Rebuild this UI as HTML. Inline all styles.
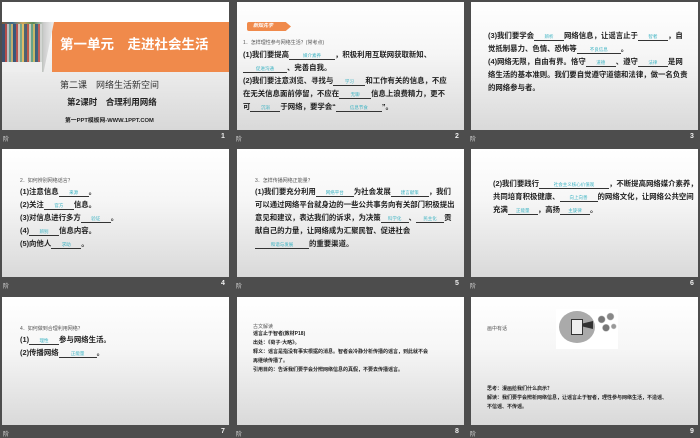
<!DOCTYPE html>
<html><head><meta charset="utf-8"><style>
*{margin:0;padding:0;box-sizing:border-box}
body{width:700px;height:438px;background:#4d4d4d;position:relative;overflow:hidden;font-family:"Liberation Sans","Noto Sans CJK SC",sans-serif}
.s{position:absolute;width:227px;height:128px;background:linear-gradient(#ffffff 0%,#f6f6f6 40%,#d9d9d9 100%);overflow:hidden}
.t{position:absolute;white-space:nowrap;color:#222;font-weight:bold;font-size:7.4px;line-height:13px}
.q{position:absolute;white-space:nowrap;color:#555;font-size:5px}
.b{display:inline-block;border-bottom:0.8px solid #333;height:8px;vertical-align:baseline;text-align:center;font-size:4.5px;line-height:7px;color:#3bb3c3;font-weight:normal}
.f{position:absolute;color:#ddd;font-size:6px}
.n{position:absolute;color:#eee;font-size:7px;font-weight:bold}
</style></head><body>

<!-- slide 1 -->
<div class="s" style="left:2px;top:2px;background:linear-gradient(#fff 0,#fff 20px,#ececec 70px,#d8d8d8 128px)">
 <div style="position:absolute;left:50px;top:20px;width:177px;height:50px;background:#f08a4b"></div>
 <div style="position:absolute;left:0;top:20px;width:52px;height:50px;background:linear-gradient(90deg,#7a5a3a,#3e6a8a 20%,#c9a35a 40%,#5a8a5a 60%,#ccc 80%,#eee);clip-path:polygon(0 0,100% 0,80% 100%,0 100%)"></div>
 <div style="position:absolute;left:0;top:22px;width:40px;height:48px;background:repeating-linear-gradient(90deg,#2d4d7a 0 3px,#c44 3px 5px,#ddd 5px 7px,#6a9 7px 9px,#e9c46a 9px 11px);opacity:.75"></div>
 <div style="position:absolute;left:0;top:60px;width:40px;height:10px;background:#eee"></div>
 <div class="t" style="left:58px;top:35px;font-size:13.5px;line-height:16px;color:#fff">第一单元　走进社会生活</div>
 <div class="t" style="left:58px;top:77px;font-size:9px;font-weight:normal;color:#333">第二课　网络生活新空间</div>
 <div class="t" style="left:65px;top:94px;font-size:8.5px">第2课时　合理利用网络</div>
 <div class="t" style="left:63px;top:113px;font-size:5.8px">第一PPT模板网-WWW.1PPT.COM</div>
</div>
<div class="f" style="left:3px;top:134px">阶</div><div class="n" style="left:221px;top:133px">1</div>

<!-- slide 2 -->
<div class="s" style="left:237px;top:2px">
 <div style="position:absolute;left:10px;top:20px;width:44px;height:9px;background:#f08a4b;border-radius:2px;clip-path:polygon(0 0,88% 0,100% 50%,88% 100%,0 100%)"></div>
 <div class="t" style="left:16px;top:18px;font-size:5px;color:#fff;font-style:italic">新知先学</div>
 <div class="q" style="left:6px;top:37px">1．怎样理性参与网络生活？(常考点)</div>
 <div class="t" style="left:6px;top:46px">(1)我们要提高<span class="b" style="width:46px">媒介素养</span>，积极利用互联网获取新知、</div>
 <div class="t" style="left:6px;top:59px"><span class="b" style="width:44px">促进沟通</span>、完善自我。</div>
 <div class="t" style="left:6px;top:72px">(2)我们要注意浏览、寻找与<span class="b" style="width:32px">学习</span>和工作有关的信息，不应</div>
 <div class="t" style="left:6px;top:85px">在无关信息面前停留，不应在<span class="b" style="width:32px">无聊</span>信息上浪费精力，更不</div>
 <div class="t" style="left:6px;top:98px">可<span class="b" style="width:30px">沉溺</span>于网络，要学会“<span class="b" style="width:46px">信息节食</span>”。</div>
</div>
<div class="f" style="left:236px;top:134px">阶</div><div class="n" style="left:455px;top:133px">2</div>

<!-- slide 3 -->
<div class="s" style="left:471px;top:2px">
 <div class="t" style="left:17px;top:27px">(3)我们要学会<span class="b" style="width:30px">辨析</span>网络信息，让谣言止于<span class="b" style="width:30px">智者</span>，自</div>
 <div class="t" style="left:17px;top:40px">觉抵制暴力、色情、恐怖等<span class="b" style="width:44px">不良信息</span>。</div>
 <div class="t" style="left:17px;top:53px">(4)网络无限，自由有界。恪守<span class="b" style="width:30px">道德</span>、遵守<span class="b" style="width:30px">法律</span>是网</div>
 <div class="t" style="left:17px;top:66px">络生活的基本准则。我们要自觉遵守道德和法律，做一名负责</div>
 <div class="t" style="left:17px;top:79px">的网络参与者。</div>
</div>
<div class="f" style="left:470px;top:134px">阶</div><div class="n" style="left:690px;top:133px">3</div>

<!-- slide 4 -->
<div class="s" style="left:2px;top:149px">
 <div class="q" style="left:18px;top:28px">2．如何辨别网络谣言？</div>
 <div class="t" style="left:18px;top:36px">(1)注意信息<span class="b" style="width:30px">来源</span>。</div>
 <div class="t" style="left:18px;top:49px">(2)关注<span class="b" style="width:30px">官方</span>信息。</div>
 <div class="t" style="left:18px;top:62px">(3)对信息进行多方<span class="b" style="width:30px">验证</span>。</div>
 <div class="t" style="left:18px;top:75px">(4)<span class="b" style="width:30px">辨别</span>信息内容。</div>
 <div class="t" style="left:18px;top:88px">(5)向他人<span class="b" style="width:30px">求助</span>。</div>
</div>
<div class="f" style="left:3px;top:281px">阶</div><div class="n" style="left:221px;top:280px">4</div>

<!-- slide 5 -->
<div class="s" style="left:237px;top:149px">
 <div class="q" style="left:18px;top:28px">3．怎样传播网络正能量？</div>
 <div class="t" style="left:18px;top:36px">(1)我们要充分利用<span class="b" style="width:38px">网络平台</span>为社会发展<span class="b" style="width:38px">建言献策</span>，我们</div>
 <div class="t" style="left:18px;top:49px">可以通过网络平台就身边的一些公共事务向有关部门积极提出</div>
 <div class="t" style="left:18px;top:62px">意见和建议，表达我们的诉求，为决策<span class="b" style="width:28px">科学化</span>、<span class="b" style="width:28px">民主化</span>贡</div>
 <div class="t" style="left:18px;top:75px">献自己的力量，让网络成为汇聚民智、促进社会</div>
 <div class="t" style="left:18px;top:88px"><span class="b" style="width:54px">和谐与发展</span>的重要渠道。</div>
</div>
<div class="f" style="left:236px;top:281px">阶</div><div class="n" style="left:455px;top:280px">5</div>

<!-- slide 6 -->
<div class="s" style="left:471px;top:149px">
 <div class="t" style="left:22px;top:28px">(2)我们要践行<span class="b" style="width:70px">社会主义核心价值观</span>，不断提高网络媒介素养，</div>
 <div class="t" style="left:22px;top:41px">共同培育积极健康、<span class="b" style="width:38px">向上向善</span>的网络文化，让网络公共空间</div>
 <div class="t" style="left:22px;top:54px">充满<span class="b" style="width:30px">正能量</span>，高扬<span class="b" style="width:30px">主旋律</span>。</div>
</div>
<div class="f" style="left:470px;top:281px">阶</div><div class="n" style="left:690px;top:280px">6</div>

<!-- slide 7 -->
<div class="s" style="left:2px;top:297px">
 <div class="q" style="left:18px;top:28px">4．如何做到合理利用网络？</div>
 <div class="t" style="left:18px;top:36px">(1)<span class="b" style="width:30px">理性</span>参与网络生活。</div>
 <div class="t" style="left:18px;top:49px">(2)传播网络<span class="b" style="width:38px">正能量</span>。</div>
</div>
<div class="f" style="left:3px;top:429px">阶</div><div class="n" style="left:221px;top:428px">7</div>

<!-- slide 8 -->
<div class="s" style="left:237px;top:297px">
 <div class="q" style="left:16px;top:26px">古文解读</div>
 <div class="t" style="left:16px;top:33px;font-size:5px;line-height:9px">谣言止于智者(教材P18)</div>
 <div class="t" style="left:16px;top:42px;font-size:5px;line-height:9px">出处：《荀子·大略》。</div>
 <div class="t" style="left:16px;top:51px;font-size:5px;line-height:9px">释义：谣言是指没有事实根据的消息。智者会冷静分析传播的谣言，到此就不会</div>
 <div class="t" style="left:16px;top:60px;font-size:5px;line-height:9px">再继续传播了。</div>
 <div class="t" style="left:16px;top:69px;font-size:5px;line-height:9px">引用目的：告诉我们要学会分辨网络信息的真假，不要去传播谣言。</div>
</div>
<div class="f" style="left:236px;top:429px">阶</div><div class="n" style="left:455px;top:428px">8</div>

<!-- slide 9 -->
<div class="s" style="left:471px;top:297px">
 <div class="q" style="left:16px;top:28px">画中有话</div>
 <div style="position:absolute;left:85px;top:12px;width:62px;height:40px;background:#fff"></div>
 <div style="position:absolute;left:88px;top:14px;width:36px;height:32px;border-radius:50%;background:#aaa"></div>
 <div style="position:absolute;left:100px;top:22px;width:12px;height:16px;border:1px solid #333;background:#eee"></div>
 <div style="position:absolute;left:112px;top:24px;width:10px;height:8px;background:#333;clip-path:polygon(0 30%,100% 0,100% 100%,0 70%)"></div>
 <div style="position:absolute;left:124px;top:14px;width:22px;height:28px;background:radial-gradient(circle at 30% 30%,#777 3px,transparent 4px),radial-gradient(circle at 70% 20%,#888 3px,transparent 4px),radial-gradient(circle at 50% 60%,#777 3px,transparent 4px),radial-gradient(circle at 85% 55%,#999 2px,transparent 3px)"></div>
 <div class="t" style="left:16px;top:88px;font-size:5px;line-height:9px">思考：漫画给我们什么启示？</div>
 <div class="t" style="left:16px;top:97px;font-size:5px;line-height:9px">解读：我们要学会辨析网络信息，让谣言止于智者，理性参与网络生活，不造谣、</div>
 <div class="t" style="left:16px;top:106px;font-size:5px;line-height:9px">不信谣、不传谣。</div>
</div>
<div class="f" style="left:470px;top:429px">阶</div><div class="n" style="left:690px;top:428px">9</div>

</body></html>
